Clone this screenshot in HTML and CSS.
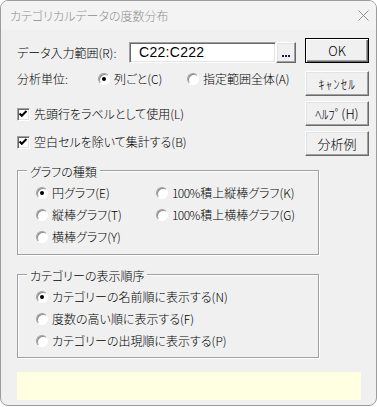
FILE: index.html
```html
<!DOCTYPE html>
<html lang="ja">
<head>
<meta charset="utf-8">
<title>カテゴリカルデータの度数分布</title>
<link rel="stylesheet" href="styles.css">
</head>
<body>
<div class="window">
  <div class="titlebar">
    <span class="title">カテゴリカルデータの度数分布</span>
    <svg class="close" width="11" height="11" viewBox="0 0 11 11"><path d="M0.5 0.5 L10.5 10.5 M10.5 0.5 L0.5 10.5" stroke="#8e8e8e" stroke-width="1" fill="none"/></svg>
  </div>
  <div class="content">
    <div class="top">
      <div class="left">
        <div class="row range-row">
          <span class="range-lbl">データ入力範囲(R):</span>
          <div class="input">C22:C222</div>
          <div class="dots-btn"><svg width="8" height="2" viewBox="0 0 8 2"><rect x="0" y="0" width="2" height="2" fill="#1b1b4b"/><rect x="3" y="0" width="2" height="2" fill="#1b1b4b"/><rect x="6" y="0" width="2" height="2" fill="#1b1b4b"/></svg></div>
        </div>
        <div class="row unit-row">
          <span class="unit-lbl">分析単位:</span>
          <span class="opt unit-first"><span class="radio on"></span>列ごと(C)</span>
          <span class="opt"><span class="radio"></span>指定範囲全体(A)</span>
        </div>
        <div class="row opt first-check"><span class="check"><svg width="11" height="11" viewBox="0 0 11 11"><polyline points="1.5,4.5 3.8,6.8 8.5,2" fill="none" stroke="#000" stroke-width="2"/></svg></span>先頭行をラベルとして使用(L)</div>
        <div class="row opt second-check"><span class="check"><svg width="11" height="11" viewBox="0 0 11 11"><polyline points="1.5,4.5 3.8,6.8 8.5,2" fill="none" stroke="#000" stroke-width="2"/></svg></span>空白セルを除いて集計する(B)</div>
      </div>
      <div class="buttons">
        <div class="btn btn-ok">OK</div>
        <div class="btn btn-cancel hw">ｷｬﾝｾﾙ</div>
        <div class="btn btn-help">ﾍﾙﾌﾟ(H)</div>
        <div class="btn btn-ex">分析例</div>
      </div>
    </div>

    <fieldset class="group g1">
      <legend>グラフの種類</legend>
      <div class="radio-grid">
        <span class="opt"><span class="radio on"></span>円グラフ(E)</span>
        <span class="opt"><span class="radio"></span><span><span class="pct">100%</span>積上縦棒グラフ(K)</span></span>
        <span class="opt"><span class="radio"></span>縦棒グラフ(T)</span>
        <span class="opt"><span class="radio"></span><span><span class="pct">100%</span>積上横棒グラフ(G)</span></span>
        <span class="opt"><span class="radio"></span>横棒グラフ(Y)</span>
      </div>
    </fieldset>

    <fieldset class="group g2">
      <legend>カテゴリーの表示順序</legend>
      <div class="radio-list">
        <span class="opt"><span class="radio on"></span>カテゴリーの名前順に表示する(N)</span>
        <span class="opt"><span class="radio"></span>度数の高い順に表示する(F)</span>
        <span class="opt"><span class="radio"></span>カテゴリーの出現順に表示する(P)</span>
      </div>
    </fieldset>

    <div class="info"></div>
  </div>
</div>
</body>
</html>
```

FILE: styles.css
```css
* { box-sizing: border-box; }

html, body {
  margin: 0;
  background: #ffffff;
}

body {
  font-family: "Noto Sans CJK JP", "Noto Sans", sans-serif;
  font-size: 12px;
  font-weight: 300;
  color: #000;
  font-feature-settings: "palt";
}

.window {
  width: 377px;
  height: 406px;
  border: 1px solid #9c9c9c;
  border-radius: 8px;
  background: #f0f0f0;
  overflow: hidden;
}

.titlebar {
  height: 29px;
  display: flex;
  align-items: center;
  justify-content: space-between;
  padding: 0 7px 0 9px;
  background: #f3f3f3;
}

.title {
  color: #8e8e8e;
  font-size: 12px;
  line-height: 16px;
}

.close { display: block; }

.content {
  padding: 0 7px 0 16px;
}

.top {
  display: flex;
  height: 126px;
}

.left { flex: 1; }

.row {
  display: flex;
  align-items: center;
  height: 16px;
  line-height: 16px;
  white-space: nowrap;
}

.range-row {
  height: 21px;
  margin-top: 12px;
}

.range-lbl { width: 112px; }

.input {
  width: 147px;
  height: 21px;
  background: #fff;
  border: 1px solid;
  border-color: #a0a0a0 #fff #fff #a0a0a0;
  box-shadow: inset 1px 1px 0 #696969, inset -1px -1px 0 #e3e3e3;
  padding-left: 9px;
  font-family: "Liberation Sans", Arial, sans-serif;
  font-weight: 400;
  font-size: 14px;
  line-height: 19px;
  letter-spacing: 0.3px;
}

.dots-btn {
  width: 20px;
  height: 21px;
  display: flex;
  align-items: flex-end;
  justify-content: center;
  padding-bottom: 5px;
  background: #f0f0f0;
  border: 1px solid;
  border-color: #fff #696969 #696969 #fff;
  box-shadow: inset -1px -1px 0 #a0a0a0, inset 1px 1px 0 #e3e3e3;
}

.dots-btn svg { display: block; }

.unit-row { margin-top: 8px; }
.unit-lbl { width: 81px; }
.unit-first { width: 89px; }

.first-check { margin-top: 19px; }
.second-check { margin-top: 12px; }

.opt {
  display: flex;
  align-items: center;
  gap: 4px;
  height: 16px;
  line-height: 16px;
  white-space: nowrap;
}

.pct { letter-spacing: -0.6px; margin-right: 0.6px; }

.radio {
  position: relative;
  flex: none;
  width: 12px;
  height: 12px;
  border-radius: 50%;
  background: #fff;
  border: 1px solid;
  border-color: #a0a0a0 #fff #fff #a0a0a0;
  box-shadow: inset 1px 1px 0 #8a8a8a;
}

.radio.on::after {
  content: "";
  position: absolute;
  left: 3px;
  top: 3px;
  width: 4px;
  height: 4px;
  border-radius: 50%;
  background: #000;
}

.check {
  flex: none;
  width: 13px;
  height: 13px;
  background: #fff;
  border: 1px solid;
  border-color: #a0a0a0 #fff #fff #a0a0a0;
  box-shadow: inset 1px 1px 0 #696969, inset -1px -1px 0 #e3e3e3;
  display: flex;
  align-items: center;
  justify-content: center;
}

.check svg { display: block; }

.buttons {
  width: 64px;
  display: flex;
  flex-direction: column;
}

.btn {
  height: 25px;
  display: flex;
  align-items: center;
  justify-content: center;
  background: #f0f0f0;
  border: 1px solid;
  border-color: #fff #696969 #696969 #fff;
  box-shadow: inset -1px -1px 0 #a0a0a0, inset 1px 1px 0 #e3e3e3;
  font-size: 13px;
  line-height: 16px;
  white-space: nowrap;
  font-feature-settings: normal;
}

.btn.hw { letter-spacing: 1px; }

.btn-ok {
  margin-top: 8px;
  border: 1px solid #000;
  box-shadow: inset 1px 1px 0 #fff, inset -1px -1px 0 #696969, inset -2px -2px 0 #a0a0a0;
}

.btn-cancel { margin-top: 8px; }
.btn-help { margin-top: 5px; }
.btn-ex { margin-top: 5px; }

.group {
  width: 302px;
  margin: 0;
  padding: 5px 0 9px 0;
  border: 1px solid #a0a0a0;
  box-shadow: inset 1px 1px 0 #fff, 1px 1px 0 #fff;
  min-inline-size: 0;
}

.group legend {
  margin-left: 9px;
  padding: 4px 3px 0;
  line-height: 16px;
  background: #f0f0f0;
}

.g1 { margin-top: 4px; }

.g2 {
  margin-top: 9px;
  padding-bottom: 8px;
}

.radio-grid {
  margin-left: 18px;
  display: grid;
  grid-template-columns: 120px auto;
  row-gap: 6px;
}

.radio-list {
  margin-left: 18px;
  display: flex;
  flex-direction: column;
  gap: 6px;
}

.info {
  margin-top: 14px;
  width: 344px;
  height: 28px;
  background: #ffffe1;
}
```
